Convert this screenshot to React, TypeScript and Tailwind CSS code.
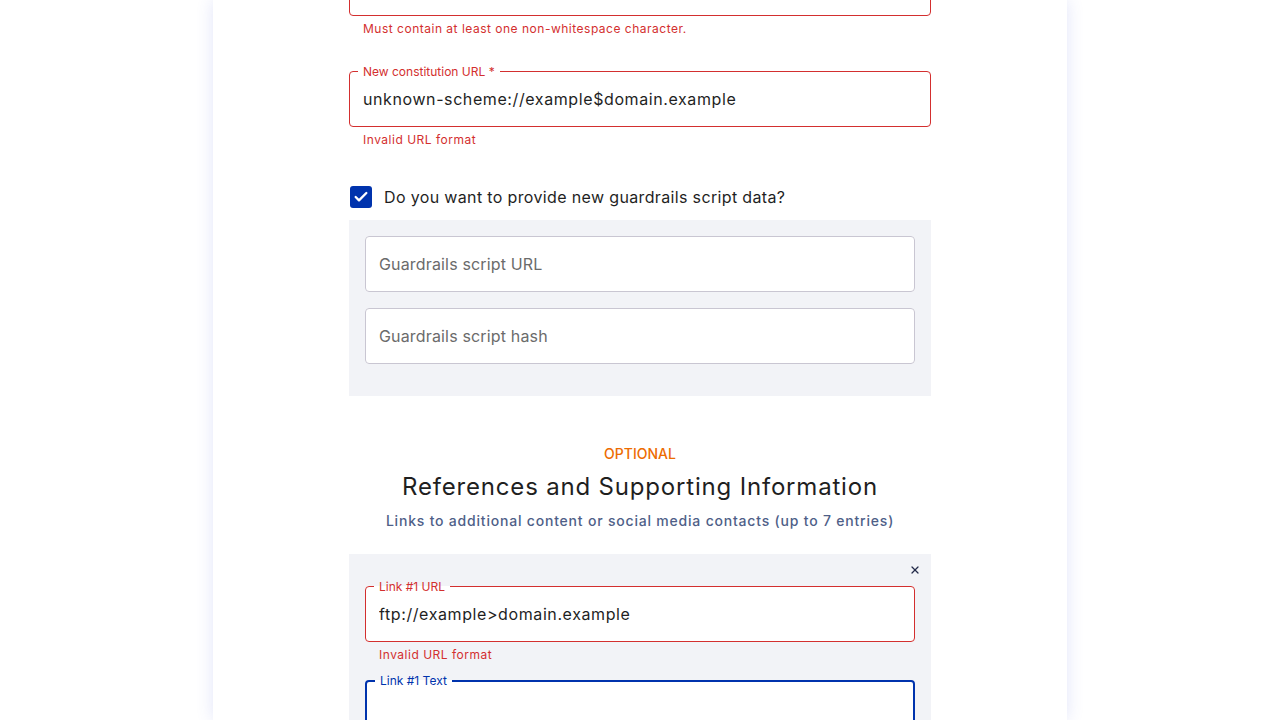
import { Check, X } from "lucide-react";

type FieldProps = {
  label?: string;
  value?: string;
  placeholder?: string;
  error?: string;
  tone?: "error" | "focus" | "plain";
};

const toneBorder = {
  error: "border border-[#d32f2f]",
  focus: "border-2 border-[#0033ad]",
  plain: "border border-[#c9c6d2]",
};

const toneLabel = {
  error: "text-[#d32f2f]",
  focus: "text-[#0033ad]",
  plain: "text-[#666]",
};

function Field({ label, value, placeholder, error, tone = "plain" }: FieldProps) {
  return (
    <div>
      <div className="relative h-14 rounded bg-white">
        <input
          readOnly
          value={value ?? ""}
          placeholder={placeholder}
          className="h-full w-full bg-transparent px-[14px] text-base tracking-[0.037em] text-[#1f1f1f] outline-none placeholder:tracking-[0.01em] placeholder:text-[#6b6b6b]"
        />
        <fieldset
          className={`pointer-events-none absolute inset-x-0 bottom-0 -top-[5px] m-0 rounded px-2 ${toneBorder[tone]}`}
        >
          <legend
            className={`h-[11px] text-xs leading-[11px] ${label ? "px-[5px]" : "p-0"} ${toneLabel[tone]}`}
          >
            {label}
          </legend>
        </fieldset>
      </div>
      {error && (
        <p className="mt-[3px] px-[14px] text-xs leading-5 tracking-[0.042em] text-[#d32f2f]">{error}</p>
      )}
    </div>
  );
}

export default function App() {
  return (
    <div className="min-h-[720px] bg-white font-['Inter','Noto_Sans',sans-serif] text-[#1f1f1f]">
      <div className="mx-auto h-[720px] w-[854px] overflow-hidden bg-white px-[136px] shadow-[0_0_16px_rgba(70,90,220,0.16)]">
        <div className="-mt-[40px]">
          {/* Previous field (cut off) */}
          <Field tone="error" error="Must contain at least one non-whitespace character." />

          <div className="mt-8">
            <Field
              tone="error"
              label="New constitution URL *"
              value="unknown-scheme://example$domain.example"
              error="Invalid URL format"
            />
          </div>

          {/* Guardrails checkbox */}
          <label className="mt-[26px] flex h-[42px] items-center gap-3">
            <span className="ml-px flex h-[22px] w-[22px] items-center justify-center rounded-[3px] bg-[#0033ad]">
              <Check className="h-4 w-4 text-white" strokeWidth={3.5} />
            </span>
            <span className="text-base tracking-[0.022em]">Do you want to provide new guardrails script data?</span>
          </label>

          <div className="mt-[2px] flex flex-col gap-4 bg-[#f2f3f7] px-4 pb-8 pt-4">
            <Field placeholder="Guardrails script URL" />
            <Field placeholder="Guardrails script hash" />
          </div>

          {/* References header */}
          <div className="mt-12 text-center">
            <p className="text-sm font-medium uppercase leading-5 text-[#ed6c02]">Optional</p>
            <h2 className="mt-[7px] text-2xl leading-8 tracking-[0.034em] text-[#1f1f1f]">
              References and Supporting Information
            </h2>
            <p className="mt-2 text-sm font-medium leading-5 tracking-[0.057em] text-[#4f5f88]">
              Links to additional content or social media contacts (up to 7 entries)
            </p>
          </div>

          <div className="relative mt-[23px] bg-[#f2f3f7] px-4 pb-8 pt-8">
            <button className="absolute right-[10px] top-[10px] flex h-3 w-3 items-center justify-center text-[#242b4a]">
              <X className="h-3 w-3" strokeWidth={2.5} />
            </button>
            <Field
              tone="error"
              label="Link #1 URL"
              value="ftp://example>domain.example"
              error="Invalid URL format"
            />
            <div className="mt-[15px]">
              <Field tone="focus" label="Link #1 Text" />
            </div>
          </div>
        </div>
      </div>
    </div>
  );
}
